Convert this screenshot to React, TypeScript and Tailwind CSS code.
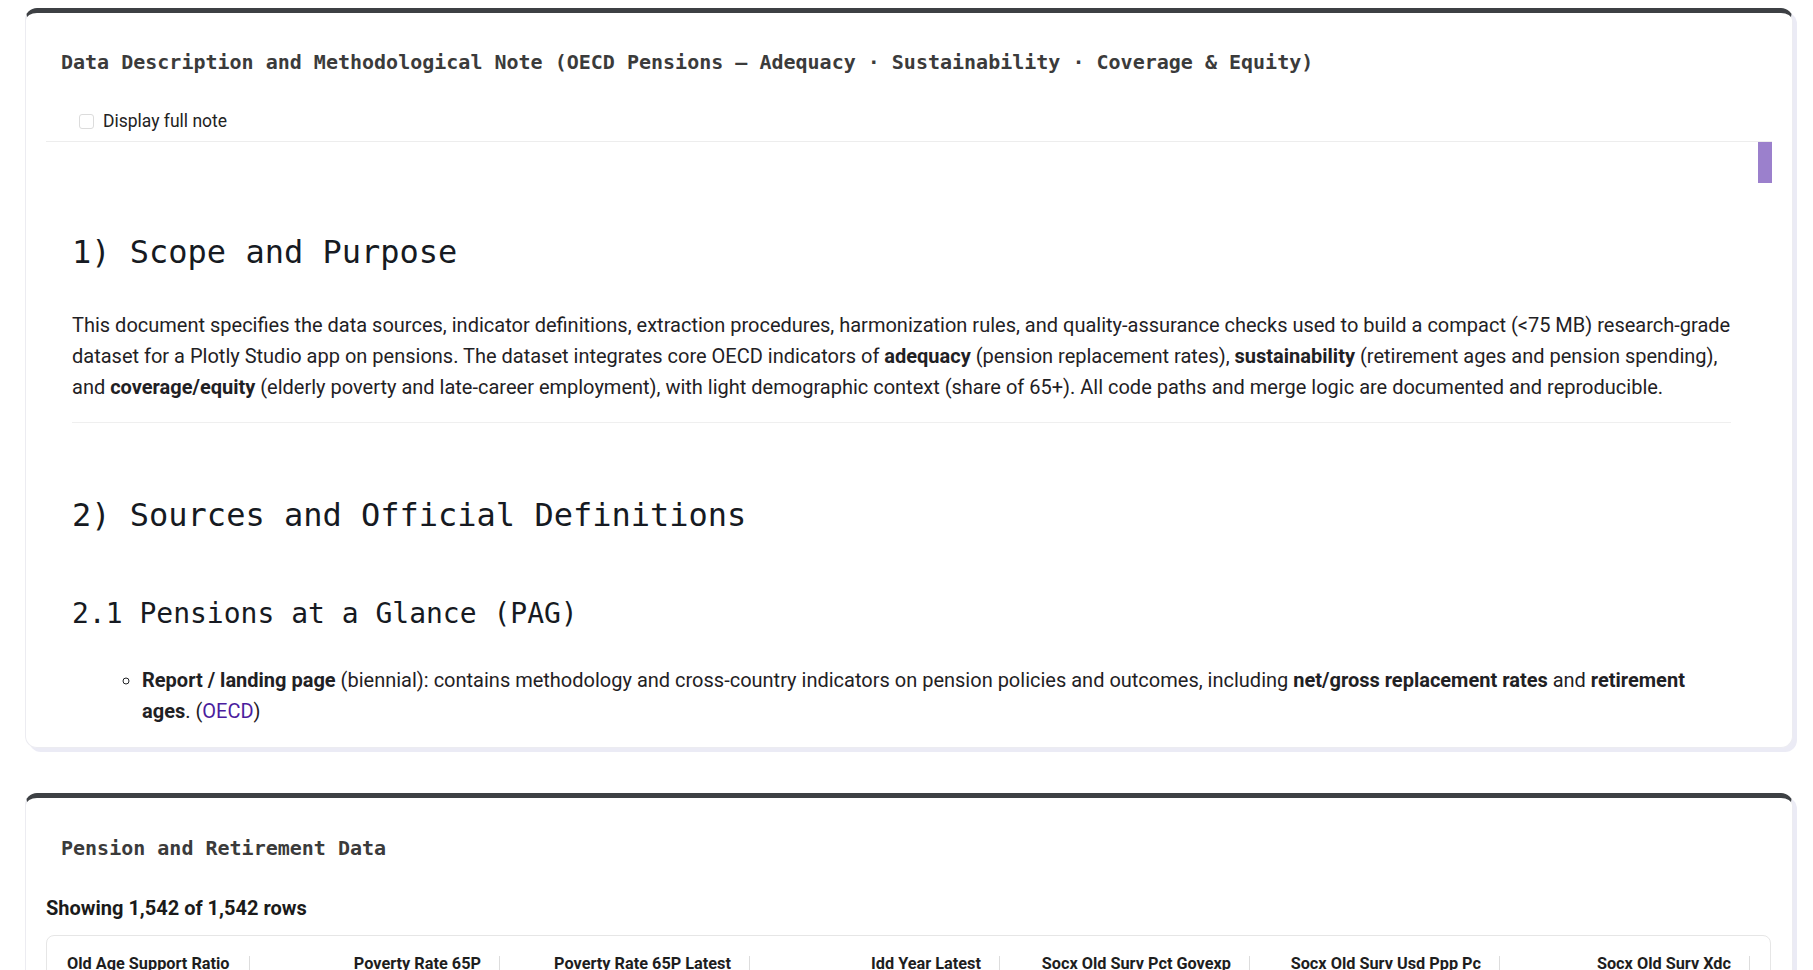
import React from "react";

const mono = "font-['DejaVu_Sans_Mono','Liberation_Mono',monospace]";
const sans = "font-['Roboto','Liberation_Sans',sans-serif]";

const columns = [
  "Old Age Support Ratio",
  "Poverty Rate 65P",
  "Poverty Rate 65P Latest",
  "Idd Year Latest",
  "Socx Old Surv Pct Govexp",
  "Socx Old Surv Usd Ppp Pc",
  "Socx Old Surv Xdc",
];

const NoteCard = () => (
  <div className="ml-[25px] mt-[8px] w-[1768px] rounded-[12px] border border-t-[5px] border-[#ececf1] border-t-[#3d4044] bg-white px-[20px] pb-[19px] shadow-[4px_4px_0_0_#ebebf5]">
    <h2 className={`pl-[15px] pt-[35px] text-[20px] leading-[28px] font-bold text-[#3b3b3b] ${mono}`}>
      Data Description and Methodological Note (OECD Pensions – Adequacy · Sustainability · Coverage &amp; Equity)
    </h2>

    <label className={`mt-[33px] flex h-[24px] items-center pl-[33px] text-[17.5px] text-[#222] ${sans}`}>
      <span className="mr-[9px] h-[15px] w-[15px] rounded-[3px] border border-[#dcdcdc] bg-white" />
      Display full note
    </label>

    <div className="mt-[8px] flex h-[587px] border-t border-[#ededed]">
      <div className={`flex-1 overflow-hidden pl-[26px] pr-[27px] text-[#1f2124] ${sans}`}>
        <h1 className={`mt-[90px] text-[32px] leading-[40px] text-[#161a22] ${mono}`}>1) Scope and Purpose</h1>
        <p className="mt-[38px] text-[20px] leading-[31px]">
          This document specifies the data sources, indicator definitions, extraction procedures, harmonization rules, and
          quality-assurance checks used to build a compact (&lt;75 MB) research-grade dataset for a Plotly Studio app on
          pensions. The dataset integrates core OECD indicators of <b>adequacy</b> (pension replacement rates),{" "}
          <b>sustainability</b> (retirement ages and pension spending), and <b>coverage/equity</b> (elderly poverty and
          late-career employment), with light demographic context (share of 65+). All code paths and merge logic are
          documented and reproducible.
        </p>
        <hr className="mt-[19px] border-[#efefef]" />
        <h1 className={`mt-[72px] text-[32px] leading-[40px] text-[#161a22] ${mono}`}>2) Sources and Official Definitions</h1>
        <h3 className={`mt-[61px] text-[28px] leading-[36px] text-[#161a22] ${mono}`}>2.1 Pensions at a Glance (PAG)</h3>
        <ul className="mt-[33px] list-[circle] pl-[70px] text-[20px] leading-[31px]">
          <li>
            <b>Report / landing page</b> (biennial): contains methodology and cross-country indicators on pension policies
            and outcomes, including <b>net/gross replacement rates</b> and <b>retirement ages</b>.{" "}
            (<span className="text-[#4b1d9e]">OECD</span>)
          </li>
        </ul>
      </div>
      <div className="w-[14px]">
        <div className="h-[41px] bg-[#9b80cc]" />
      </div>
    </div>
  </div>
);

const DataCard = () => (
  <div className="ml-[25px] mt-[45px] w-[1768px] rounded-[12px] border border-t-[5px] border-[#ececf1] border-t-[#3d4044] bg-white px-[20px] pb-[19px] shadow-[4px_4px_0_0_#ebebf5]">
    <h2 className={`pl-[15px] pt-[36px] text-[20px] leading-[28px] font-bold text-[#3b3b3b] ${mono}`}>
      Pension and Retirement Data
    </h2>
    <div className={`mt-[33px] text-[20px] leading-[26px] font-bold text-[#1b1b1b] ${sans}`}>
      Showing 1,542 of 1,542 rows
    </div>
    <div className="mt-[14px] h-[300px] w-[1725px] rounded-[8px] border border-[#e6e6e6]">
      <div className={`flex pt-[18px] text-[16.3px] leading-[20px] font-bold text-[#1e1e1e] ${sans}`}>
        {columns.map((c, i) => (
          <div key={c} className={`flex items-center ${i === 0 ? "w-[203px]" : "w-[250px]"}`}>
            <span className={`flex-1 whitespace-nowrap ${i === 0 ? "pl-[20px] text-left" : "pr-[18px] text-right"}`}>{c}</span>
            <span className="h-[16px] w-px bg-[#dddddd]" />
          </div>
        ))}
      </div>
    </div>
  </div>
);

export default function App() {
  return (
    <div className="h-screen overflow-hidden bg-white">
      <NoteCard />
      <DataCard />
    </div>
  );
}
